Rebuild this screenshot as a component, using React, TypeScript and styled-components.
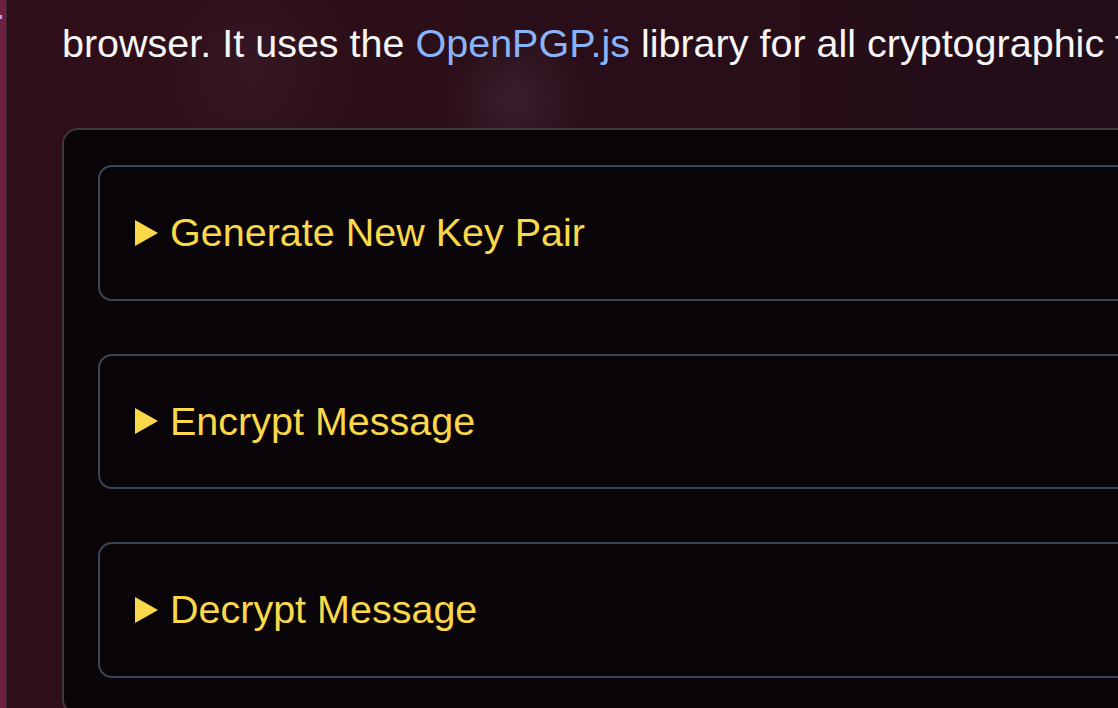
import React from "react";
import styled, { createGlobalStyle } from "styled-components";

const GlobalStyle = createGlobalStyle`
  html,
  body {
    margin: 0;
    padding: 0;
    background: #2d0e17;
    overflow: hidden;
  }
  #root {
    height: 708px;
  }
`;

const Page = styled.div`
  display: flex;
  width: 1118px;
  height: 708px;
  overflow: hidden;
  font-family: "Liberation Sans", Arial, sans-serif;
  background:
    radial-gradient(circle at 250px 72px, rgba(72, 42, 62, 0.32), transparent 110px),
    radial-gradient(circle at 515px 100px, rgba(82, 52, 72, 0.42), transparent 72px),
    linear-gradient(90deg, #2f0e18 0%, #2a0e19 50%, #220d18 100%);
`;

const EdgeRail = styled.div`
  position: relative;
  flex: 0 0 6px;
  background: #6c2140;
  border-right: 1px solid #3b2530;
`;

const RailMark = styled.span`
  position: absolute;
  top: 15px;
  left: 0;
  width: 2px;
  height: 4px;
  background: #b9a6f0;
`;

const Main = styled.main`
  flex: 1;
  min-width: 0;
  padding-left: 55px;
`;

const Intro = styled.p`
  margin: -65px 0 0;
  font-size: 39.5px;
  line-height: 72px;
  color: #f7f6f7;
  white-space: nowrap;
`;

const Link = styled.a`
  color: #8ab4f8;
  text-decoration: none;
`;

const Panel = styled.section`
  margin-top: 49px;
  width: 1200px;
  padding: 35px 34px;
  background: #0a0508;
  border: 2px solid #3d393e;
  border-radius: 16px;
  display: flex;
  flex-direction: column;
  gap: 53px;
`;

const Item = styled.details`
  border: 2px solid #3c4555;
  border-radius: 14px;
`;

const Summary = styled.summary`
  list-style: none;
  display: flex;
  align-items: center;
  gap: 12px;
  height: 131.5px;
  padding: 0 35px;
  color: #fbd84a;
  font-size: 39.5px;
  cursor: pointer;

  &::-webkit-details-marker {
    display: none;
  }
`;

const Arrow = () => (
  <svg width="23" height="26" viewBox="0 0 23 26" aria-hidden="true">
    <polygon points="0,0 23,13 0,26" fill="#fbd84a" />
  </svg>
);

const sections = ["Generate New Key Pair", "Encrypt Message", "Decrypt Message"];

const App: React.FC = () => {
  return (
    <>
      <GlobalStyle />
      <Page>
        <EdgeRail>
          <RailMark />
        </EdgeRail>
        <Main>
          <Intro>
            This page generates keys, encrypts, and decrypts messages, all inside your
            <br />
            browser. It uses the <Link href="#">OpenPGP.js</Link> library for all cryptographic functions.
          </Intro>
          <Panel>
            {sections.map((title) => (
              <Item key={title}>
                <Summary>
                  <Arrow />
                  {title}
                </Summary>
              </Item>
            ))}
          </Panel>
        </Main>
      </Page>
    </>
  );
};

export default App;
